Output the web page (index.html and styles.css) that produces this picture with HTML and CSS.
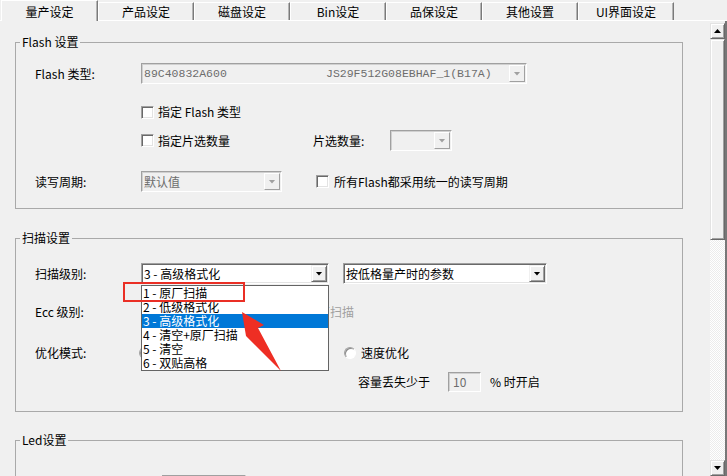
FILE: index.html
```html
<!DOCTYPE html>
<html lang="zh-CN">
<head>
    <meta charset="UTF-8" />
    <title>量产设定</title>
    <link rel="stylesheet" href="styles.css">
</head>
<body>

<div class="window">
    <div class="tabs">
        <div class="tab active">量产设定</div>
        <div class="tab">产品设定</div>
        <div class="tab">磁盘设定</div>
        <div class="tab">Bin设定</div>
        <div class="tab">品保设定</div>
        <div class="tab">其他设置</div>
        <div class="tab">UI界面设定</div>
    </div>

    <div class="page">
        <div class="content">

            <!-- Flash 设置 -->
            <fieldset class="group group-flash">
                <legend>Flash 设置</legend>
                <div class="group-body">
                    <div class="row row-tall">
                        <span class="label">Flash 类型:</span>
                        <div class="combo disabled combo-flash">
                            <span class="value mono mono-id">89C40832A600</span>
                            <span class="value mono">JS29F512G08EBHAF_1(B17A)</span>
                            <span class="drop"></span>
                        </div>
                    </div>
                    <div class="row indent gap-18">
                        <span class="check"></span>
                        <span class="check-text">指定 Flash 类型</span>
                    </div>
                    <div class="row row-tall indent gap-8">
                        <span class="check"></span>
                        <span class="check-text check-cs">指定片选数量</span>
                        <span class="label label-cs">片选数量:</span>
                        <div class="combo disabled combo-cs">
                            <span class="value"></span>
                            <span class="drop"></span>
                        </div>
                    </div>
                    <div class="row row-tall gap-20">
                        <span class="label">读写周期:</span>
                        <div class="combo disabled combo-cycle">
                            <span class="value">默认值</span>
                            <span class="drop"></span>
                        </div>
                        <span class="check check-all"></span>
                        <span class="check-text">所有Flash都采用统一的读写周期</span>
                    </div>
                </div>
            </fieldset>

            <!-- 扫描设置 -->
            <fieldset class="group group-scan">
                <legend>扫描设置</legend>
                <div class="group-body">
                    <div class="row row-tall">
                        <span class="label">扫描级别:</span>
                        <div class="combo combo-level">
                            <span class="value">3 - 高级格式化</span>
                            <span class="drop"></span>
                            <ul class="combo-list">
                                <li>1 - 原厂扫描</li>
                                <li>2 - 低级格式化</li>
                                <li class="selected">3 - 高级格式化</li>
                                <li>4 - 清空+原厂扫描</li>
                                <li>5 - 清空</li>
                                <li>6 - 双贴高格</li>
                            </ul>
                        </div>
                        <div class="combo combo-param">
                            <span class="value">按低格量产时的参数</span>
                            <span class="drop"></span>
                        </div>
                    </div>
                    <div class="row gap-18">
                        <span class="label">Ecc 级别:</span>
                        <div class="combo combo-ecc">
                            <span class="value">48</span>
                            <span class="drop"></span>
                        </div>
                        <span class="check check-skip"></span>
                        <span class="check-text muted">跳过原厂扫描</span>
                    </div>
                    <div class="row gap-21">
                        <span class="label">优化模式:</span>
                        <span class="option option-size">
                            <span class="radio"></span>
                            <span class="radio-text">容量优化</span>
                        </span>
                        <span class="option">
                            <span class="radio"></span>
                            <span class="radio-text">速度优化</span>
                        </span>
                    </div>
                    <div class="row gap-9 row-loss">
                        <span>容量丢失少于</span>
                        <span class="field disabled">10</span>
                        <span class="unit">% 时开启</span>
                    </div>
                </div>
            </fieldset>

            <!-- Led设置 -->
            <fieldset class="group group-led">
                <legend>Led设置</legend>
                <div class="group-body">
                    <div class="row row-tall">
                        <span class="label label-led">指示灯模式:</span>
                        <div class="combo combo-led">
                            <span class="value">常亮</span>
                            <span class="drop"></span>
                        </div>
                    </div>
                </div>
            </fieldset>

        </div>

        <div class="scrollbar">
            <div class="sb-btn"><span class="sb-arrow up"></span></div>
            <div class="sb-thumb"></div>
            <div class="sb-track"></div>
            <div class="sb-btn"><span class="sb-arrow"></span></div>
        </div>
    </div>

    <svg class="markup" width="727" height="476" viewBox="0 0 727 476">
        <rect x="124" y="283" width="120" height="18" fill="none" stroke="#ea2f25" stroke-width="2"/>
        <polygon points="242,312 264,325 258,328 281,371 246,336" fill="#ee2e24"/>
    </svg>
</div>

</body>
</html>
```

FILE: styles.css
```css
* {
    box-sizing: border-box;
}
body {
    margin: 0;
    width: 727px;
    height: 476px;
    overflow: hidden;
    background-color: #f0f0f0;
    color: #000;
    font-family: "Noto Sans CJK SC", "Liberation Sans", sans-serif;
    font-size: 12px;
    line-height: 14px;
}
.window {
    position: relative;
    width: 727px;
    height: 476px;
    overflow: hidden;
}

/* tabs */
.tabs {
    display: flex;
    height: 21px;
    padding-left: 1px;
    border-bottom: 1px solid #fff;
}
.tab {
    width: 96px;
    height: 18px;
    margin-top: 2px;
    line-height: 18px;
    text-align: center;
    border-left: 1px solid #fff;
    border-top: 1px solid #fff;
    border-right: 1px solid #7a7a7a;
    box-shadow: inset -1px 0 #b4b4b4;
}
.tab.active {
    width: 97px;
    height: 21px;
    margin-top: 0;
    margin-bottom: -1px;
    line-height: 22px;
    background-color: #f0f0f0;
    position: relative;
}

/* page */
.page {
    display: flex;
    height: 455px;
    border-right: 2px solid #777;
}
.content {
    width: 710px;
    padding: 14px 27px 0 15px;
}
.group {
    margin: 0;
    padding: 0;
    min-width: 0;
    border: 1px solid #a9a9a9;
}
.group legend {
    margin-left: 4px;
    padding: 0 2px;
    line-height: 14px;
}
.group-body {
    padding-left: 19px;
}
.group-flash .group-body {
    padding-top: 14px;
    padding-bottom: 16px;
}
.group-scan {
    margin-top: 22px;
}
.group-scan .group-body {
    padding-top: 18px;
    padding-bottom: 19px;
}
.group-led {
    margin-top: 21px;
}
.group-led .group-body {
    padding-top: 28px;
    padding-bottom: 20px;
}

/* rows */
.row {
    display: flex;
    align-items: center;
    height: 20px;
}
.row-tall {
    height: 21px;
}
.gap-8 { margin-top: 8px; }
.gap-9 { margin-top: 9px; }
.gap-18 { margin-top: 18px; }
.gap-20 { margin-top: 20px; }
.gap-21 { margin-top: 21px; }
.indent {
    padding-left: 106px;
}
.label {
    width: 106px;
    flex-shrink: 0;
}
.label-cs {
    width: 77px;
}
.label-led {
    width: 127px;
}
.muted {
    color: #a0a0a0;
}

/* checkbox / radio */
.check {
    width: 13px;
    height: 13px;
    flex-shrink: 0;
    background-color: #fff;
    border: 1px solid;
    border-color: #a0a0a0 #fff #fff #a0a0a0;
    box-shadow: inset 1px 1px #696969, inset -1px -1px #e3e3e3;
}
.check-text {
    margin-left: 4px;
    white-space: nowrap;
}
.check-cs {
    width: 155px;
}
.check-all {
    margin-left: 34px;
}
.check-all + .check-text {
    margin-left: 5px;
}
.check-skip {
    margin-left: 4px;
}
.option {
    display: flex;
    align-items: center;
}
.option-size {
    width: 205px;
    margin-left: -2px;
}
.radio {
    width: 12px;
    height: 12px;
    border-radius: 50%;
    background-color: #fff;
    border: 1px solid;
    border-color: #a0a0a0 #fff #fff #a0a0a0;
    box-shadow: inset 1px 1px #8a8a8a;
}
.radio-text {
    margin-left: 5px;
}

/* combo boxes */
.combo {
    position: relative;
    display: flex;
    align-items: center;
    height: 21px;
    padding: 0 1px 0 2px;
    background-color: #fff;
    border: 1px solid;
    border-color: #a0a0a0 #fff #fff #a0a0a0;
    box-shadow: inset 1px 1px #696969, inset -1px -1px #e3e3e3;
    flex-shrink: 0;
}
.combo .value {
    flex: 1;
    white-space: nowrap;
}
.combo.disabled {
    background-color: #f0f0f0;
    color: #6d6d6d;
    box-shadow: inset 1px 1px #d0d0d0;
}
.drop {
    width: 16px;
    height: 17px;
    flex-shrink: 0;
    display: flex;
    align-items: center;
    justify-content: center;
    background-color: #f0f0f0;
    border: 1px solid;
    border-color: #f0f0f0 #696969 #696969 #f0f0f0;
    box-shadow: inset 1px 1px #fff, inset -1px -1px #a0a0a0;
}
.drop::after {
    content: "";
    width: 7px;
    height: 4px;
    background-color: #000;
    clip-path: polygon(0 0, 100% 0, 50% 100%);
}
.disabled .drop {
    border-color: #fff #a0a0a0 #a0a0a0 #fff;
    box-shadow: none;
}
.disabled .drop::after {
    background-color: #a0a0a0;
}
.mono {
    font-family: "Liberation Mono", monospace;
    font-size: 11.5px;
}
.combo-flash {
    width: 386px;
}
.combo-flash .mono-id {
    flex: none;
    width: 182px;
}
.combo-cs {
    width: 62px;
}
.combo-cycle {
    width: 141px;
}
.combo-level {
    width: 188px;
}
.combo-param {
    width: 204px;
    margin-left: 14px;
}
.combo-ecc {
    width: 120px;
}
.combo-led {
    width: 84px;
}
.combo-list {
    position: absolute;
    left: -1px;
    top: 21px;
    width: 188px;
    margin: 0;
    padding: 0;
    list-style: none;
    background-color: #fff;
    border: 1px solid #646464;
    z-index: 5;
}
.combo-list li {
    height: 14px;
    line-height: 14px;
    padding-left: 1px;
    white-space: nowrap;
}
.combo-list li.selected {
    background-color: #0078d7;
    color: #fff;
}

/* loss threshold */
.row-loss {
    padding-left: 323px;
}
.field {
    width: 33px;
    height: 20px;
    margin-left: 18px;
    padding-left: 4px;
    line-height: 18px;
    border: 1px solid;
    border-color: #a0a0a0 #fff #fff #a0a0a0;
    box-shadow: inset 1px 1px #d0d0d0;
}
.field.disabled {
    color: #6d6d6d;
}
.unit {
    margin-left: 9px;
}

/* scrollbar */
.scrollbar {
    width: 15px;
    margin-top: 2px;
    display: flex;
    flex-direction: column;
}
.sb-btn,
.sb-thumb {
    background-color: #f0f0f0;
    border: 1px solid;
    border-color: #e3e3e3 #696969 #696969 #e3e3e3;
    box-shadow: inset 1px 1px #fff, inset -1px -1px #a0a0a0;
}
.sb-btn {
    height: 16px;
    flex-shrink: 0;
    display: flex;
    align-items: center;
    justify-content: center;
}
.sb-thumb {
    height: 201px;
    flex-shrink: 0;
}
.sb-track {
    flex: 1;
    background: repeating-conic-gradient(#fff 0 25%, #ececec 0 50%) 0 0 / 2px 2px;
}
.sb-arrow {
    width: 7px;
    height: 4px;
    background-color: #000;
    clip-path: polygon(0 0, 100% 0, 50% 100%);
}
.sb-arrow.up {
    clip-path: polygon(50% 0, 100% 100%, 0 100%);
}

/* annotation over the screenshot */
.markup {
    position: absolute;
    left: 0;
    top: 0;
    pointer-events: none;
    z-index: 10;
}
```
